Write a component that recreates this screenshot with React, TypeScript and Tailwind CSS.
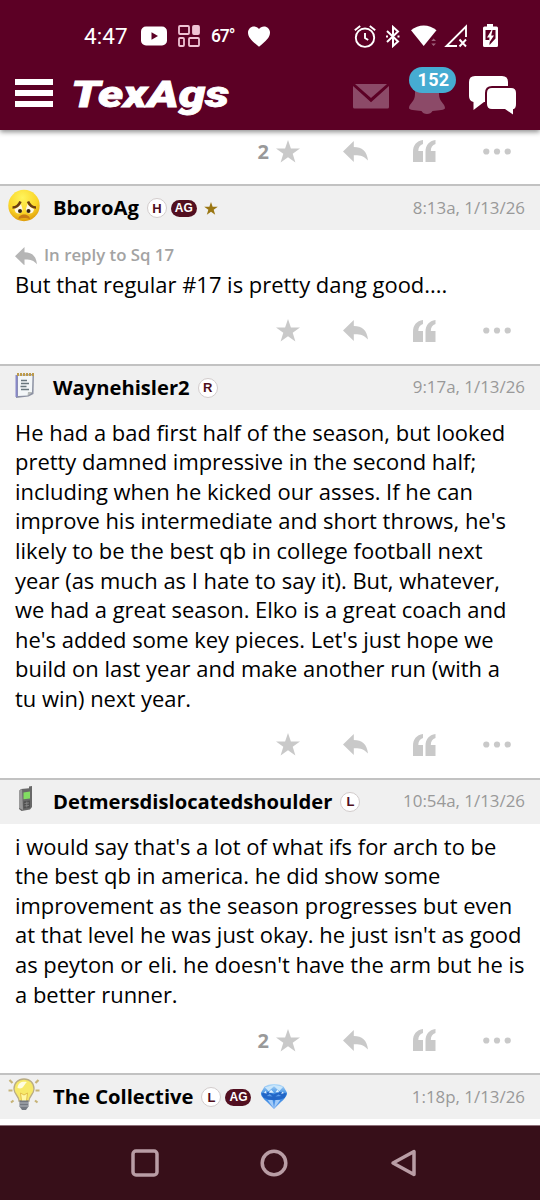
import type { ReactNode } from "react";

type Post = {
  author: string;
  time: string;
  avatar: ReactNode;
  badges: ReactNode;
  replyTo?: string;
  body?: string;
  stars?: number;
};

function StatusBar() {
  return (
    <div className="flex h-[72px] items-center pl-[84px] pr-[41px] text-white">
      <span className="w-[43px] whitespace-nowrap font-['Roboto',sans-serif] text-[22.5px] leading-none tracking-[0.1px]">
        4:47
      </span>
      <svg className="ml-[14px]" width="26" height="20" viewBox="0 0 26 20">
        <rect width="26" height="19" y="0.5" rx="5" fill="#fff" />
        <path d="M10.5 6.2v7.6l6.5-3.8z" fill="#5c0025" />
      </svg>
      <svg className="ml-[11px]" width="22" height="22" viewBox="0 0 22 22" fill="none" stroke="#efc3d4" strokeWidth="1.8">
        <rect x="1" y="1" width="10" height="8" rx="1" />
        <rect x="15" y="1" width="6" height="8" rx="1" fill="#efc3d4" />
        <rect x="1" y="13" width="5" height="8" rx="1" />
        <rect x="11" y="13" width="10" height="8" rx="1" />
      </svg>
      <span className="ml-[11px] mt-[2px] w-[25px] whitespace-nowrap font-['Roboto',sans-serif] text-[17.5px] font-medium leading-none tracking-[-1.1px]">
        67°
      </span>
      <svg className="ml-[12px]" width="22" height="21" viewBox="0 0 22 21" fill="#fff">
        <path d="M11 20.8C4 15 0 11.5 0 6.5 0 3 2.7.4 6 .4c2 0 3.9 1 5 2.5C12.1 1.4 14 .4 16 .4c3.3 0 6 2.6 6 6.1 0 5-4 8.5-11 14.3z" />
      </svg>
      <div className="ml-auto flex items-center">
        <svg width="22" height="23" viewBox="0 0 22 23" fill="none" stroke="#fff" strokeWidth="1.9">
          <circle cx="11" cy="12.7" r="9.2" />
          <path d="M11 8v5l3.2 2M.8 5.2l5.4-4.3M21.2 5.2l-5.4-4.3" />
        </svg>
        <svg className="ml-[9px]" width="15" height="23" viewBox="0 0 15 23" fill="none" stroke="#fff" strokeWidth="2">
          <path d="M2 6l11 10.5-5 4.5v-19l5 4.5L2 17" />
          <path d="M1 11.5h2M12.5 11.5h2" />
        </svg>
        <svg className="ml-[11px]" width="26" height="22" viewBox="0 0 26 22">
          <path d="M0 5.3C7.5-1 18-1 25.5 5.3L12.7 21z" fill="#fff" />
          <path d="M19.5 13h8v9h-8z" fill="#5c0025" />
          <path d="M20.3 16l2.3-2.5L25 16zM20.3 18.5l2.3 2.5 2.4-2.5z" fill="#9c607a" />
        </svg>
        <svg className="ml-[7px]" width="24" height="24" viewBox="0 0 24 24" fill="none" stroke="#fff" strokeWidth="1.9">
          <path d="M13 22H2.5L22 2.5V13" />
          <path d="M15.5 15.5l6.5 7M22 15.5l-6.5 7" />
        </svg>
        <svg className="ml-[14px]" width="17" height="24" viewBox="0 0 17 24">
          <path d="M5 0h6v2.500h3.500Q16 2.500 16 4v17.500q0 1.500-1.500 1.500h-12Q1 23 1 21.500V4q0-1.500 1.500-1.500H5z" fill="#fff" />
          <path d="M3.500 6h10v8.500L7.500 21v-5h-4z" fill="#5c0025" />
          <path d="M9.500 6L5 13.500h2.500L7 19l5-7.500H9.200L10.500 6z" fill="#fff" />
        </svg>
      </div>
    </div>
  );
}

function AppBar() {
  return (
    <div className="flex h-[58px] items-start pl-[15px] pr-[23px]">
      <div className="mt-[7px] flex w-[38px] flex-col gap-[5px]">
        <span className="h-[6px] bg-white" />
        <span className="h-[6px] bg-white" />
        <span className="h-[6px] bg-white" />
      </div>
      <svg className="ml-[17px]" width="168" height="54" viewBox="0 0 168 54">
        <text
          x="1"
          y="35"
          textLength="158"
          lengthAdjust="spacingAndGlyphs"
          fill="#fff"
          stroke="#fff"
          strokeWidth="0.8"
          className="font-['Roboto',sans-serif] text-[36px] font-black italic"
        >
          TexAgs
        </text>
      </svg>
      <div className="ml-auto flex items-start">
        <svg className="mt-[12px]" width="36" height="25" viewBox="0 0 36 25" fill="#8c4a68">
          <path d="M2 0h32L18 14z" />
          <path d="M0 2L18 18.3 36 2V23q0 1.5-1.5 1.5h-33Q0 24.5 0 23z" />
        </svg>
        <div className="relative ml-[20px] mt-[9px] h-[34px] w-[36px]">
          <svg width="36" height="34" viewBox="0 0 36 34" fill="#8c4a68">
            <path d="M18 0C8 0 6 7 6 13c0 8-6 9.500-6 14 0 2 6 2.500 12.500 3 1 2 3 3 5.500 3s4.500-1 5.500-3C30 29.500 36 29 36 27c0-4.500-6-6-6-14C30 7 28 0 18 0z" />
          </svg>
          <span className="absolute left-0 top-[-14px] flex h-[26px] w-[47px] items-center justify-center rounded-full bg-[#46acd2] pb-px pl-[2px] font-['Roboto',sans-serif] text-[18px] font-bold tracking-[0.4px] text-white">
            152
          </span>
        </div>
        <svg className="ml-[24px] mt-[4px]" width="48" height="39" viewBox="0 0 48 39">
          <path d="M6 0h27q6 0 6 6v14q0 6-6 6H15L4.500 34V26Q0 25 0 20V6q0-6 6-6z" fill="#fff" />
          <path
            d="M23 12h19q5 0 5 5v11q0 5-3 5.200V38.500L36 33H23q-5 0-5-5V17q0-5 5-5z"
            fill="#fff"
            stroke="#5c0025"
            strokeWidth="4"
            paintOrder="stroke"
          />
        </svg>
      </div>
    </div>
  );
}

function ReplyIcon({ className, width, fill }: { className?: string; width: number; fill: string }) {
  return (
    <svg className={className} width={width} viewBox="0 0 25 21" fill={fill}>
      <path d="M10.8 0v6C19 6 24 10 25 19.5c-4-4.5-8-5.500-14.200-5.300V21L0 10.500z" />
    </svg>
  );
}

function Actions({ stars }: { stars?: number }) {
  return (
    <div className="flex h-[24px] items-center justify-end pr-[29px]">
      {stars && (
        <span className="mr-[7px] mt-px font-['Open_Sans',sans-serif] text-[20px] font-bold leading-none text-[#999]">
          {stars}
        </span>
      )}
      <svg width="24" height="23" viewBox="0 0 24 23" fill="#c9c9c9">
        <path d="M12 0l2.900 8.400H24l-7.300 5.300 2.700 8.900L12 17.300l-7.400 5.300 2.700-8.900L0 8.400h9.100z" />
      </svg>
      <ReplyIcon className="ml-[43px]" width={25} fill="#c9c9c9" />
      <svg className="ml-[45px]" width="23" height="22" viewBox="0 0 23 22" fill="#c9c9c9">
        <path d="M10 0v4C7 5 5.300 7.500 5.300 11H10v11H0V12C0 5 3.500 1 10 0z" />
        <path d="M22.500 0v4c-3 1-4.700 3.500-4.700 7h4.700v11h-10V12c0-7 3.500-11 10-12z" />
      </svg>
      <svg className="ml-[47px]" width="28" height="7" viewBox="0 0 28 7" fill="#c9c9c9">
        <circle cx="3.3" cy="3.5" r="3.1" />
        <circle cx="14" cy="3.5" r="3.1" />
        <circle cx="24.7" cy="3.5" r="3.1" />
      </svg>
    </div>
  );
}

function LetterBadge({ children }: { children: string }) {
  return (
    <span className="flex size-[20px] items-center justify-center rounded-full border border-[#d2cccc] bg-white font-['Liberation_Sans',sans-serif] text-[13px] font-bold leading-none text-[#500f1c]">
      {children}
    </span>
  );
}

function AgBadge() {
  return (
    <span className="ml-[4px] flex h-[17px] w-[26px] items-center justify-center rounded-full bg-[#520f20] font-['Liberation_Sans',sans-serif] text-[12px] font-bold leading-none text-white">
      AG
    </span>
  );
}

function GoldStar() {
  return (
    <svg className="ml-[7px]" width="14" height="13" viewBox="0 0 24 23" fill="#9a7612">
      <path d="M12 0l2.900 8.400H24l-7.300 5.300 2.700 8.900L12 17.300l-7.400 5.300 2.700-8.900L0 8.400h9.100z" />
    </svg>
  );
}

function Diamond() {
  return (
    <svg className="mb-[2px] ml-[9px]" width="28" height="27" viewBox="0 0 29 27">
      <defs>
        <linearGradient id="gem" x1="0" y1="0" x2="0" y2="1">
          <stop offset="0" stopColor="#b5dcfa" />
          <stop offset="0.45" stopColor="#2f83df" />
          <stop offset="1" stopColor="#6ba5ee" />
        </linearGradient>
      </defs>
      <path d="M14.5 .5c5 0 8 1 10 3l3.500 6c.5 3-3.500 7-6 9.500L14.500 26.500 7 19C4 16 .5 12.500 1 9.500L4.500 3.500C7 1.500 10 .5 14.500 .5z" fill="url(#gem)" />
      <path d="M5 4l4 4 5.500-5L20 8l4-4.500-9.500-2z" fill="#c9e6fb" />
      <path d="M1.500 10.500l7.500-2 5 3 6-3 7.500 2-2 4.500-5 1.500-6 1-6-1-5-2z" fill="#2266c7" />
      <path d="M8 17l6.500 9-1.500-9zM16 17l-1.500 9L21 17z" fill="#a3cbf8" />
      <path d="M7 13l3-2 3 2.500zM16 13.500l3-2 3 1.500z" fill="#5d9eea" />
      <path d="M9 9.500l2.500-3 3 3zM16 9l2-2.500 2 2.500zM4 10l2-2.500 1 3zM23 8.500l2 1.500-3 1z" fill="#ddf1ff" />
    </svg>
  );
}

function SadFace() {
  return (
    <svg className="mr-px" width="32" height="33" viewBox="0 0 32 33">
      <defs>
        <radialGradient id="face" cx="0.45" cy="0.25" r="0.75">
          <stop offset="0" stopColor="#fff45c" />
          <stop offset="0.65" stopColor="#fad527" />
          <stop offset="1" stopColor="#df9d0c" />
        </radialGradient>
      </defs>
      <circle cx="16" cy="16.5" r="15.7" fill="url(#face)" />
      <path d="M6.500 20c2-.5 5-3 6.500-5l1.500 5q0 4-3.500 4.500-4 0-4.500-4.500zM26 20c-2-.5-5-3-6.500-5L18 20q0 4 3.500 4.500 4 0 4.500-4.500z" fill="#fff8e6" />
      <path d="M4.500 18.500c4 0 6.500-2.500 8-6M28 18.500c-4 0-6.500-2.500-8-6" fill="none" stroke="#6b3d12" strokeWidth="2.6" />
      <circle cx="12" cy="22" r="2" fill="#352410" />
      <circle cx="20.5" cy="22" r="2" fill="#352410" />
      <path d="M10.500 30c0-6 11-6 11.500 0-3-1.500-8-1.500-11.500 0z" fill="#c67b15" />
    </svg>
  );
}

function Notepad() {
  return (
    <svg width="20" height="27" viewBox="0 0 20 27">
      <path d="M1 3L19 2l-.5 20-5 2.500L1 26z" fill="#8d92a3" />
      <path d="M3 3.500h14.500L17 20l-4.500 3.500L3 24z" fill="#f3f6f8" />
      <path d="M1.500 3v22" stroke="#8889c9" strokeWidth="2" />
      <path d="M2 2.500h17" stroke="#bd9b4b" strokeWidth="3" strokeDasharray="2 1" />
      <path d="M6 8.500h6M6 11.500h8M5.500 14.500h6M6 17.500h8" stroke="#69777e" strokeWidth="1.3" />
      <path d="M17.500 20l-5 4 .5-4z" fill="#b7bbb9" />
    </svg>
  );
}

function Phone() {
  return (
    <svg className="ml-[3px]" width="16" height="26" viewBox="0 0 16 26">
      <path d="M3 3l8-.8V.5l3-.5v21l-2 2.500-8.500 1.500L1 23V5z" fill="#686868" />
      <path d="M1 5l3-2 1 21-4-2z" fill="#9a9a9a" />
      <path d="M5.500 6.500l6.500-1v7l-6.500.8z" fill="#82dd62" />
      <path d="M5.500 15.500l6.500-1v7l-6.500 1z" fill="#505050" />
      <path d="M6.500 17.500l4.500-.6M6.500 20l4.500-.6M8.800 15.500v6" stroke="#8c8c8c" strokeWidth="0.8" />
    </svg>
  );
}

function LightBulb() {
  return (
    <svg className="mr-[2px]" width="32" height="33" viewBox="0 0 32 33">
      <path d="M1.500 2l3 3M30.500 2l-3 3M.5 12.500h4M31.500 12.500h-4M3 24.500l2.500-2M29.500 24.500l-2.500-2" stroke="#c6b377" strokeWidth="2.2" />
      <path d="M16 1C10 1 6 5 6 11c0 5 5 7 5 12h10c0-5 5-7 5-12C26 5 22 1 16 1z" fill="#f7e968" stroke="#b9ac85" strokeWidth="1.3" />
      <path d="M9.500 10C10 4.500 14 3 19 4c-3 2-3 8-9.500 6z" fill="#fffde0" />
      <path d="M13.500 23l-1-8 3.500 2 3.500-2-1 8" fill="#fff8a4" stroke="#e3bf4a" strokeWidth="1" />
      <path d="M11.500 22.500h9v6l-2.500 3.500h-4l-2.500-3.500z" fill="#747981" />
      <path d="M12 25h8M12 28h8" stroke="#b4b8be" strokeWidth="1" />
    </svg>
  );
}

const posts: Post[] = [
  {
    author: "BboroAg",
    time: "8:13a, 1/13/26",
    avatar: <SadFace />,
    badges: (
      <>
        <LetterBadge>H</LetterBadge>
        <AgBadge />
        <GoldStar />
      </>
    ),
    replyTo: "Sq 17",
    body: "But that regular #17 is pretty dang good....",
  },
  {
    author: "Waynehisler2",
    time: "9:17a, 1/13/26",
    avatar: <Notepad />,
    badges: <LetterBadge>R</LetterBadge>,
    body: `He had a bad first half of the season, but looked
pretty damned impressive in the second half;
including when he kicked our asses. If he can
improve his intermediate and short throws, he's
likely to be the best qb in college football next
year (as much as I hate to say it). But, whatever,
we had a great season. Elko is a great coach and
he's added some key pieces. Let's just hope we
build on last year and make another run (with a
tu win) next year.`,
  },
  {
    author: "Detmersdislocatedshoulder",
    time: "10:54a, 1/13/26",
    avatar: <Phone />,
    badges: <LetterBadge>L</LetterBadge>,
    body: `i would say that's a lot of what ifs for arch to be
the best qb in america. he did show some
improvement as the season progresses but even
at that level he was just okay. he just isn't as good
as peyton or eli. he doesn't have the arm but he is
a better runner.`,
    stars: 2,
  },
  {
    author: "The Collective",
    time: "1:18p, 1/13/26",
    avatar: <LightBulb />,
    badges: (
      <>
        <LetterBadge>L</LetterBadge>
        <AgBadge />
        <Diamond />
      </>
    ),
  },
];

function PostItem({ post }: { post: Post }) {
  return (
    <article className="font-['Open_Sans',sans-serif]">
      <header className="flex h-[46px] items-center border-t-2 border-[#c2c2c2] bg-[#f0f0f0] pr-[15px]">
        <div className="flex w-[49px] shrink-0 justify-center pb-[5px]">{post.avatar}</div>
        <h2 className="mb-px ml-[4px] whitespace-nowrap text-[20.2px] font-bold leading-none text-black">
          {post.author}
        </h2>
        <div className="ml-[8px] flex items-center">{post.badges}</div>
        <time className="ml-auto whitespace-nowrap text-[16.9px] leading-none text-[#999]">{post.time}</time>
      </header>
      {post.body && (
        <>
          {post.replyTo && (
            <div className="flex h-[40px] items-end pb-[5px] pl-[15px]">
              <ReplyIcon width={22} fill="#b5b5b5" />
              <span className="ml-[7px] text-[16.8px] font-semibold leading-[20px] text-[#a3a3a3]">
                In reply to {post.replyTo}
              </span>
            </div>
          )}
          <p
            className={`whitespace-pre pl-[15px] text-[21.95px] leading-[29.6px] text-black ${
              post.replyTo ? "" : "pt-[8px]"
            }`}
          >
            {post.body}
          </p>
          <div className="h-[64px] pt-[19px]">
            <Actions stars={post.stars} />
          </div>
        </>
      )}
    </article>
  );
}

function NavBar() {
  return (
    <nav className="flex h-[75px] items-center border-t border-[#8d7079] bg-[#370f19] pl-[131px]">
      <svg width="28" height="28" viewBox="0 0 28 28" fill="none" stroke="#b99da5" strokeWidth="3.5">
        <rect x="2" y="2" width="24" height="24" rx="3" />
      </svg>
      <svg className="ml-[101px]" width="28" height="28" viewBox="0 0 28 28" fill="none" stroke="#b99da5" strokeWidth="3.5">
        <circle cx="14" cy="14" r="11.8" />
      </svg>
      <svg className="ml-[102px]" width="27" height="28" viewBox="0 0 27 28" fill="none" stroke="#b99da5" strokeWidth="3.5" strokeLinejoin="round">
        <path d="M24 2.500v23L3 14z" />
      </svg>
    </nav>
  );
}

export default function App() {
  return (
    <div className="flex h-[1200px] w-[540px] flex-col overflow-hidden bg-white">
      <div className="relative z-10 h-[130px] shrink-0 bg-[#5c0025] shadow-[0_2px_5px_rgba(0,0,0,0.45)]">
        <StatusBar />
        <AppBar />
      </div>
      <main className="min-h-0 flex-1 overflow-hidden">
        <div className="h-[54px] pt-[9px]">
          <Actions stars={2} />
        </div>
        {posts.map((post) => (
          <PostItem key={post.author} post={post} />
        ))}
      </main>
      <NavBar />
    </div>
  );
}
